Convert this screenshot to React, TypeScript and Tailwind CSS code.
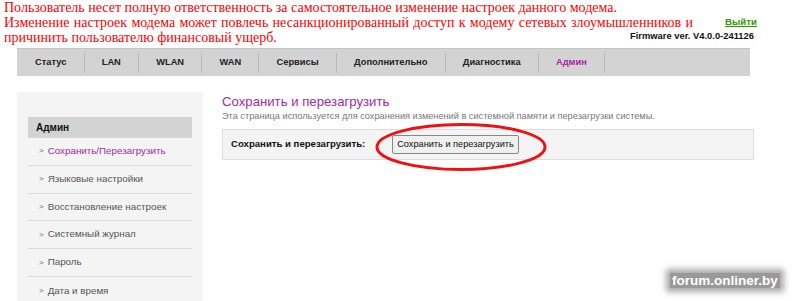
import React from 'react';

const tabs = ['Статус', 'LAN', 'WLAN', 'WAN', 'Сервисы', 'Дополнительно', 'Диагностика', 'Админ'];

const menu = [
  'Сохранить/Перезагрузить',
  'Языковые настройки',
  'Восстановление настроек',
  'Системный журнал',
  'Пароль',
  'Дата и время',
];

const App: React.FC = () => {
  return (
    <div className="relative w-[800px] h-[301px] overflow-hidden bg-white font-['Liberation_Sans',Arial,sans-serif]">
      {/* Warning + firmware */}
      <div className="flex h-[48px]">
        <div className="flex-none w-[620px] pl-[4px] text-[14px] leading-[15px] text-[#ff0000] font-['Liberation_Serif','Times_New_Roman',serif]">
          <div className="whitespace-nowrap">Пользователь несет полную ответственность за самостоятельное изменение настроек данного модема.</div>
          <div className="w-[689px] text-justify [text-align-last:justify]">
            Изменение настроек модема может повлечь несанкционированный доступ к модему сетевых злоумышленников и
          </div>
          <div className="whitespace-nowrap w-fit">причинить пользователю финансовый ущерб.</div>
        </div>
        <div className="flex-1 flex flex-col items-end pr-[43px] pt-[16px] whitespace-nowrap">
          <span className="text-[9.7px] font-bold text-[#339900] underline leading-[12px]">Выйти</span>
          <span className="mt-[2px] mr-[3px] text-[9.4px] font-bold text-[#111] leading-[12px]">Firmware ver. V4.0.0-241126</span>
        </div>
      </div>

      {/* Top nav */}
      <div className="ml-[17px] w-[733px] h-[28px] bg-[#d3d3d3] border-t border-[#c4c4c4] flex items-center pl-[18px]">
        {tabs.map((t) => (
          <div key={t} className="flex items-center">
            <span className={`text-[9.3px] font-bold ${t === 'Админ' ? 'text-[#a5299f]' : 'text-[#222]'}`}>{t}</span>
            <span className="mx-[17.2px] w-[1px] h-[20px] bg-[#b8b8b8]" />
          </div>
        ))}
      </div>

      {/* Body */}
      <div className="flex mt-[16px]">
        <div className="ml-[17px] w-[186px] h-[220px] bg-[#f4f4f4] px-[11px] pt-[25px]">
          <div className="h-[21px] bg-[#d3d3d3] pl-[8px] flex items-center text-[10px] font-bold text-[#111]">Админ</div>
          {menu.map((m, i) => (
            <div
              key={m}
              className={`h-[27.8px] flex items-center pl-[11px] ${i < menu.length - 1 ? 'border-b border-[#dcdcdc]' : ''}`}
            >
              <span className="text-[8px] text-[#666] mr-[4px]">&gt;</span>
              <span className={`text-[9.8px] ${i === 0 ? 'text-[#a5299f]' : 'text-[#555]'}`}>{m}</span>
            </div>
          ))}
        </div>

        <div className="ml-[19px] w-[532px] pt-[2px]">
          <div className="text-[13.2px] leading-[16px] text-[#a5299f]">Сохранить и перезагрузить</div>
          <div className="text-[9.2px] leading-[13px] text-[#777]">
            Эта страница используется для сохранения изменений в системной памяти и перезагрузки системы.
          </div>
          <div className="relative mt-[6px] h-[31px] bg-[#f4f4f4] border border-[#dddddd] flex items-center pl-[8px]">
            <span className="w-[161px] text-[9.6px] font-bold text-[#111]">Сохранить и перезагрузить:</span>
            <button className="w-[127px] h-[19px] bg-[#f0f0f0] border border-[#888] rounded-[2px] text-[9.2px] text-[#111]">
              Сохранить и перезагрузить
            </button>
            {/* red annotation ellipse */}
            <svg className="absolute left-[150px] top-[-8px]" width="176" height="52" viewBox="0 0 176 52">
              <ellipse cx="88" cy="25" rx="84" ry="22.5" fill="none" stroke="#ee1111" strokeWidth="3" />
            </svg>
          </div>
        </div>
      </div>

      {/* watermark */}
      <div className="absolute left-[670px] top-[273px] px-[2px] text-[13.5px] font-bold text-white bg-[#555]/60 shadow-[0_0_6px_4px_rgba(85,85,85,0.5)] leading-[15px]">
        forum.onliner.by
      </div>
    </div>
  );
};

export default App;
